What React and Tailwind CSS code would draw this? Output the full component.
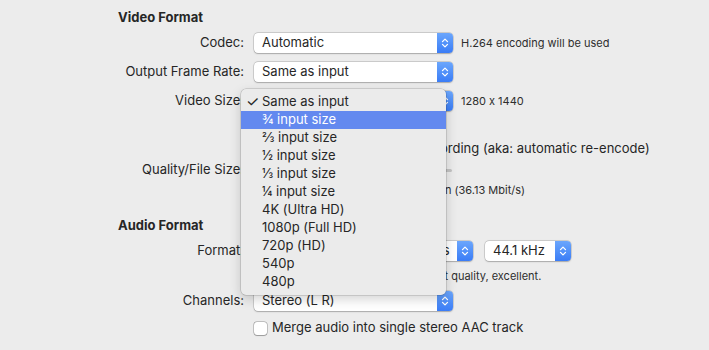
import React from "react";

function Chevrons() {
  return (
    <svg width="8" height="12" viewBox="0 0 8 12" fill="none">
      <path d="M1.5 4.6 L4 2.1 L6.5 4.6" stroke="white" strokeWidth="1.3" strokeLinecap="round" strokeLinejoin="round" />
      <path d="M1.5 7.4 L4 9.9 L6.5 7.4" stroke="white" strokeWidth="1.3" strokeLinecap="round" strokeLinejoin="round" />
    </svg>
  );
}

function Popup({ className, children }) {
  return (
    <div className={"flex h-[20px] items-stretch rounded-[4px] bg-white shadow-[0_0_0_0.5px_rgba(0,0,0,0.22),0_0.5px_1.5px_rgba(0,0,0,0.2)] " + className}>
      <div className="flex flex-1 items-center pl-[8px] text-[13px] text-[#262626] whitespace-nowrap overflow-hidden">{children}</div>
      <div className="flex w-[16px] items-center justify-center rounded-r-[4px] bg-gradient-to-b from-[#6ba6fc] to-[#3a7cf6]">
        <Chevrons />
      </div>
    </div>
  );
}

function Label({ children }) {
  return <div className="w-[244px] shrink-0 text-right text-[13px] text-[#262626] whitespace-nowrap">{children}</div>;
}

function Checkbox() {
  return <div className="h-[13px] w-[13px] shrink-0 rounded-[3px] bg-white shadow-[0_0_0_0.5px_rgba(0,0,0,0.35),0_0.5px_1px_rgba(0,0,0,0.2)]" />;
}

const items = [
  "Same as input",
  "¾ input size",
  "⅔ input size",
  "½ input size",
  "⅓ input size",
  "¼ input size",
  "4K (Ultra HD)",
  "1080p (Full HD)",
  "720p (HD)",
  "540p",
  "480p",
];

export default function App() {
  return (
    <div className="relative h-[350px] w-[709px] overflow-hidden bg-[#ececec] font-['Inter','Liberation_Sans',sans-serif] text-[#262626] [font-feature-settings:'calt'_0]">
      <div className="flex flex-col pt-[9px]">
        <div className="ml-[118px] h-[16px] text-[13px] font-bold leading-[16px]">Video Format</div>

        <div className="mt-[8px] flex h-[20px] items-center">
          <Label>Codec:</Label>
          <Popup className="ml-[10px] w-[199px]">Automatic</Popup>
          <div className="ml-[8px] text-[11px] text-[#2e2e2e]">H.264 encoding will be used</div>
        </div>

        <div className="mt-[9px] flex h-[20px] items-center">
          <Label>Output Frame Rate:</Label>
          <Popup className="ml-[10px] w-[199px]">Same as input</Popup>
        </div>

        <div className="mt-[9px] flex h-[20px] items-center">
          <Label>Video Size:</Label>
          <Popup className="ml-[10px] w-[199px]">Same as input</Popup>
          <div className="ml-[8px] text-[11px] text-[#2e2e2e]">1280 x 1440</div>
        </div>

        <div className="mt-[30px] flex h-[16px] items-center">
          <div className="w-[254px] shrink-0" />
          <Checkbox />
          <div className="ml-[19px] text-[13px] whitespace-nowrap">Keep same quality as recording (aka: automatic re-encode)</div>
        </div>

        <div className="mt-[3px] flex h-[20px] items-center">
          <Label>Quality/File Size:</Label>
          <div className="ml-[10px] h-[3px] w-[198px] rounded-full bg-[#c4c4c4]" />
        </div>

        <div className="mt-[3px] flex h-[14px] items-center">
          <div className="w-[254px] shrink-0" />
          <div className="ml-[6px] text-[11px] text-[#2e2e2e] whitespace-nowrap">Good quality, moderate compression (36.13 Mbit/s)</div>
        </div>

        <div className="ml-[118px] mt-[20px] h-[16px] text-[13px] font-bold leading-[16px]">Audio Format</div>

        <div className="mt-[8px] flex h-[20px] items-center">
          <Label>Format:</Label>
          <Popup className="ml-[10px] w-[219px]">Highest quality AAC, 256 kbps</Popup>
          <Popup className="ml-[12px] w-[86px]">44.1 kHz</Popup>
        </div>

        <div className="mt-[8px] flex h-[14px] items-center">
          <div className="w-[254px] shrink-0" />
          <div className="ml-[62px] text-[11px] text-[#2e2e2e] whitespace-nowrap">AAC at 256 kbps: highest quality, excellent.</div>
        </div>

        <div className="mt-[8px] flex h-[20px] items-center">
          <Label>Channels:</Label>
          <Popup className="ml-[10px] w-[199px]">Stereo (L R)</Popup>
        </div>

        <div className="mt-[9px] flex h-[16px] items-center">
          <div className="w-[254px] shrink-0" />
          <Checkbox />
          <div className="ml-[5px] text-[13px] whitespace-nowrap">Merge audio into single stereo AAC track</div>
        </div>
      </div>

      <div className="absolute left-[241px] top-[89px] w-[205px] rounded-[5px] bg-[#ebebeb] py-[4px] shadow-[0_0_0_0.5px_rgba(0,0,0,0.22),0_4px_12px_rgba(0,0,0,0.18)]">
        {items.map((t, i) => (
          <div
            key={t}
            className={
              "relative flex h-[18px] items-center pl-[21px] text-[13px] " +
              (i === 1 ? "bg-[#6389ef] text-white" : "text-[#262626]")
            }
          >
            {i === 0 && <span className="absolute left-[5px] text-[15px] leading-[18px]">✓</span>}
            {t}
          </div>
        ))}
      </div>
    </div>
  );
}
